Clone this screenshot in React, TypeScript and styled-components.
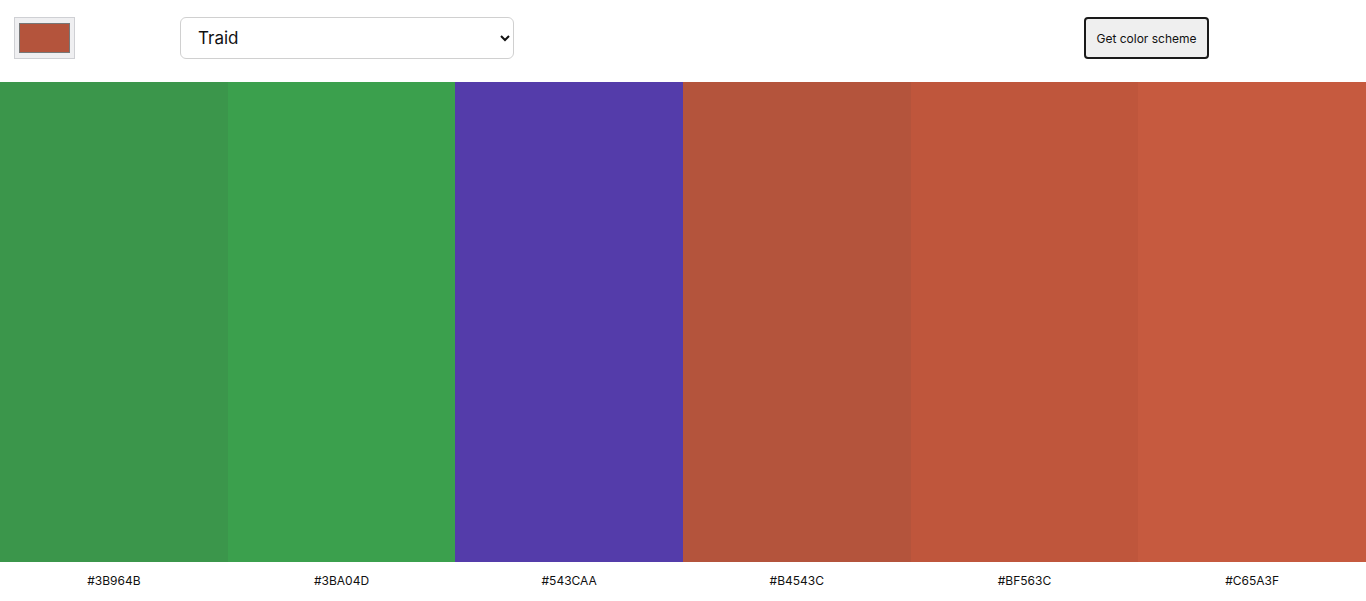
import React from "react";
import styled, { createGlobalStyle } from "styled-components";

const Global = createGlobalStyle`
  html, body { margin: 0; padding: 0; background: #fff; }
  body { font-family: Inter, "Noto Sans", sans-serif; color: #000; }
`;

const Header = styled.header`
  display: flex;
  align-items: flex-start;
  height: 82px;
  padding: 17px 0 0 14px;
  box-sizing: border-box;
`;

const ColorInput = styled.input`
  width: 61px;
  height: 42px;
  margin: 0;
  box-sizing: border-box;
  border: 1px solid #cfd0d4;
  background: #efeff1;
  padding: 1px 2px;
  cursor: pointer;
`;

const Select = styled.select`
  margin: 0 0 0 105px;
  width: 334px;
  height: 42px;
  box-sizing: border-box;
  border: 1px solid #d0d0d0;
  border-radius: 6px;
  background: #fff;
  padding: 0 10px 0 13px;
  font-family: Inter, "Noto Sans", sans-serif;
  font-size: 17px;
  color: #111;
`;

const Button = styled.button`
  margin: 0 0 0 570px;
  width: 125px;
  height: 42px;
  box-sizing: border-box;
  border: 2px solid #1a1a1a;
  border-radius: 4px;
  background: #efefef;
  font-family: Inter, "Noto Sans", sans-serif;
  font-size: 12px;
  color: #111;
  padding: 0;
  cursor: pointer;
`;

const Palette = styled.main`
  display: grid;
  grid-template-columns: repeat(6, 1fr);
`;

const Column = styled.div`
  display: flex;
  flex-direction: column;
`;

const Swatch = styled.div<{ $c: string }>`
  height: 480px;
  background: ${(p) => p.$c};
`;

const Label = styled.p`
  margin: 0;
  height: 37px;
  display: flex;
  align-items: center;
  justify-content: center;
  font-size: 12px;
  color: #111;
`;

const colors = ["#3B964B", "#3BA04D", "#543CAA", "#B4543C", "#BF563C", "#C65A3F"];

export default function App() {
  return (
    <>
      <Global />
      <Header>
        <ColorInput type="color" defaultValue="#b4543c" />
        <Select defaultValue="triad">
          <option value="monochrome">Monochrome</option>
          <option value="triad">Traid</option>
          <option value="complement">Complement</option>
        </Select>
        <Button>Get color scheme</Button>
      </Header>
      <Palette>
        {colors.map((c) => (
          <Column key={c}>
            <Swatch $c={c} />
            <Label>{c}</Label>
          </Column>
        ))}
      </Palette>
    </>
  );
}
